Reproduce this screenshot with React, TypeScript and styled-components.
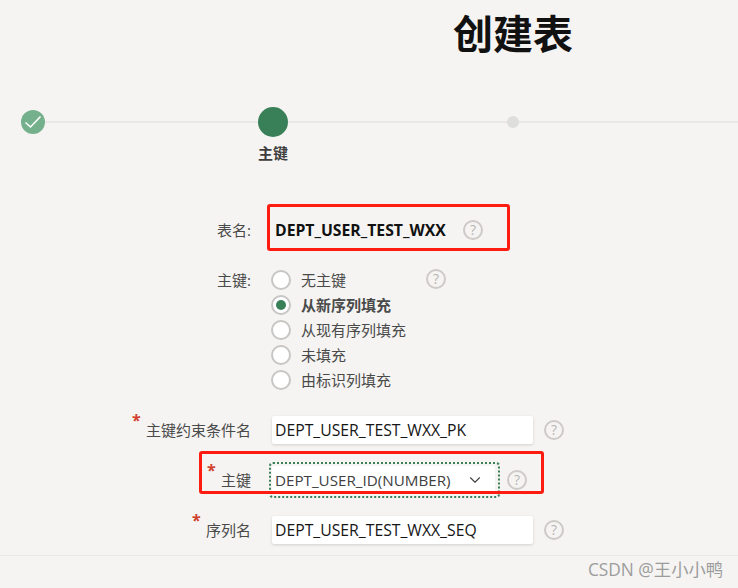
import React from 'react';
import styled, { createGlobalStyle } from 'styled-components';
import { ChevronDown } from 'lucide-react';

const GlobalStyle = createGlobalStyle`
  html, body {
    margin: 0;
    padding: 0;
    background: #f5f4f2;
  }
  body {
    font-family: "Open Sans", "Noto Sans CJK SC", sans-serif;
    color: #404040;
  }
`;

const Page = styled.div`
  position: relative;
  width: 738px;
  height: 588px;
  overflow: hidden;
  background: #f5f4f2;
`;

const Title = styled.h1`
  margin: 0;
  padding-left: 453px;
  height: 67px;
  font-size: 40px;
  line-height: 67px;
  font-weight: 700;
  color: #111;
`;

const Steps = styled.div`
  display: flex;
  margin: 40px 0 0 -87px;
  background: linear-gradient(#e9e8e6, #e9e8e6) 120px 14px / 100% 2px no-repeat;
  height: 60px;
`;

const Step = styled.div`
  width: 240px;
  flex: none;
  display: flex;
  flex-direction: column;
  align-items: center;
`;

const DotSlot = styled.div`
  height: 30px;
  display: flex;
  align-items: center;
  justify-content: center;
`;

const DoneDot = styled.div`
  width: 24px;
  height: 24px;
  border-radius: 50%;
  background: #75b08d;
  display: flex;
  align-items: center;
  justify-content: center;
`;

const ActiveDot = styled.div`
  width: 30px;
  height: 30px;
  border-radius: 50%;
  background: #398059;
`;

const TodoDot = styled.div`
  width: 12px;
  height: 12px;
  border-radius: 50%;
  background: #dededc;
`;

const StepLabel = styled.div`
  margin-top: 7px;
  font-size: 15px;
  line-height: 18px;
  font-weight: 700;
  color: #3d3d3d;
`;

const Row = styled.div<{ $top: number; $align?: string }>`
  position: relative;
  display: flex;
  align-items: ${p => p.$align || 'center'};
  margin-top: ${p => p.$top}px;
`;

const Label = styled.div`
  width: 251px;
  flex: none;
  text-align: right;
  font-size: 15px;
  line-height: 20px;
  color: #4a4a4a;
`;

const Required = styled.span`
  position: relative;
`;

const Star = styled.span<{ $left: number }>`
  position: absolute;
  left: ${p => p.$left}px;
  top: -10px;
  font-size: 16px;
  line-height: 20px;
  font-weight: 700;
  color: #d0402c;
`;

const TableName = styled.div`
  margin-left: 24px;
  width: 188px;
  font-size: 15.75px;
  line-height: 20px;
  font-weight: 700;
  color: #111;
  white-space: nowrap;
`;

const Help = styled.div<{ $gap: number }>`
  width: 20px;
  height: 20px;
  box-sizing: border-box;
  margin-left: ${p => p.$gap}px;
  flex: none;
  border-radius: 50%;
  border: 2px solid #cdcac7;
  color: #b8b5b2;
  font-size: 14px;
  line-height: 16px;
  text-align: center;
`;

const RadioGroup = styled.div`
  margin-left: 20px;
  display: flex;
  flex-direction: column;
  gap: 5px;
`;

const RadioRow = styled.div`
  position: relative;
  display: flex;
  align-items: center;
  height: 20px;
`;

const Radio = styled.span<{ $checked?: boolean }>`
  width: 20px;
  height: 20px;
  box-sizing: border-box;
  flex: none;
  border-radius: 50%;
  border: 2px solid #c8c6c4;
  background: #fff;
  display: flex;
  align-items: center;
  justify-content: center;
  &::after {
    content: "";
    display: ${p => (p.$checked ? 'block' : 'none')};
    width: 10px;
    height: 10px;
    border-radius: 50%;
    background: #398059;
  }
`;

const RadioText = styled.span<{ $checked?: boolean }>`
  margin-left: 10px;
  font-size: 15px;
  line-height: 20px;
  font-weight: ${p => (p.$checked ? 700 : 400)};
  color: #4a4a4a;
`;

const FloatHelp = styled(Help)`
  position: absolute;
  left: 155px;
  top: -1px;
  margin-left: 0;
`;

const Input = styled.div`
  margin-left: 21px;
  width: 261px;
  height: 28px;
  box-sizing: border-box;
  padding-left: 3px;
  background: #fff;
  border-radius: 2px;
  box-shadow: 0 1px 3px rgba(0, 0, 0, 0.15);
  font-size: 15.75px;
  line-height: 28px;
  color: #161616;
  white-space: nowrap;
`;

const SelectFocus = styled.div`
  margin-left: 18px;
  width: 231px;
  height: 36px;
  box-sizing: border-box;
  padding: 2px 3px 2px 1px;
  border: 2px dotted #3a8059;
  border-radius: 4px;
`;

const Select = styled.div`
  height: 100%;
  box-sizing: border-box;
  padding: 0 11px 0 3px;
  background: #fff;
  border-radius: 2px;
  display: flex;
  align-items: center;
  justify-content: space-between;
  font-size: 15.2px;
  color: #404040;
  white-space: nowrap;
`;

const RedBox = styled.div<{ $l: number; $t: number; $w: number; $h: number }>`
  position: absolute;
  left: ${p => p.$l}px;
  top: ${p => p.$t}px;
  width: ${p => p.$w}px;
  height: ${p => p.$h}px;
  box-sizing: border-box;
  border: 3px solid #fe1c10;
  border-radius: 3px;
  pointer-events: none;
`;

const Divider = styled.div`
  margin-top: 11px;
  height: 1px;
  background: #e9e8e6;
`;

const Watermark = styled.div`
  position: absolute;
  right: 15px;
  bottom: 8px;
  font-size: 17.3px;
  line-height: 20px;
  color: #9c9c9c;
`;

const App = () => {
  return (
    <Page>
      <GlobalStyle />
      <Title>创建表</Title>
      <Steps>
        <Step>
          <DotSlot>
            <DoneDot>
              <svg width="18" height="14" viewBox="0 0 18 14" fill="none">
                <polyline points="1.5,7.5 6.5,12 16.5,1.5" stroke="#fff" strokeWidth="1.6" />
              </svg>
            </DoneDot>
          </DotSlot>
        </Step>
        <Step>
          <DotSlot>
            <ActiveDot />
          </DotSlot>
          <StepLabel>主键</StepLabel>
        </Step>
        <Step>
          <DotSlot>
            <TodoDot />
          </DotSlot>
        </Step>
      </Steps>

      <Row $top={53}>
        <Label>表名:</Label>
        <TableName>DEPT_USER_TEST_WXX</TableName>
        <Help $gap={0}>?</Help>
        <RedBox $l={267} $t={-16} $w={243} $h={47} />
      </Row>

      <Row $top={30} $align="flex-start">
        <Label>主键:</Label>
        <RadioGroup>
          <RadioRow>
            <Radio />
            <RadioText>无主键</RadioText>
            <FloatHelp $gap={0}>?</FloatHelp>
          </RadioRow>
          <RadioRow>
            <Radio $checked />
            <RadioText $checked>从新序列填充</RadioText>
          </RadioRow>
          <RadioRow>
            <Radio />
            <RadioText>从现有序列填充</RadioText>
          </RadioRow>
          <RadioRow>
            <Radio />
            <RadioText>未填充</RadioText>
          </RadioRow>
          <RadioRow>
            <Radio />
            <RadioText>由标识列填充</RadioText>
          </RadioRow>
        </RadioGroup>
      </Row>

      <Row $top={26}>
        <Label>
          <Required>
            <Star $left={-14}>*</Star>主键约束条件名
          </Required>
        </Label>
        <Input>DEPT_USER_TEST_WXX_PK</Input>
        <Help $gap={11}>?</Help>
      </Row>

      <Row $top={18}>
        <Label>
          <Required>
            <Star $left={-14}>*</Star>主键
          </Required>
        </Label>
        <SelectFocus>
          <Select>
            DEPT_USER_ID(NUMBER)
            <ChevronDown size={18} strokeWidth={1.5} color="#444" />
          </Select>
        </SelectFocus>
        <Help $gap={7}>?</Help>
        <RedBox $l={199} $t={-11} $w={345} $h={43} />
      </Row>

      <Row $top={18}>
        <Label>
          <Required>
            <Star $left={-14}>*</Star>序列名
          </Required>
        </Label>
        <Input>DEPT_USER_TEST_WXX_SEQ</Input>
        <Help $gap={11}>?</Help>
      </Row>

      <Divider />
      <Watermark>CSDN @王小小鸭</Watermark>
    </Page>
  );
};

export default App;
